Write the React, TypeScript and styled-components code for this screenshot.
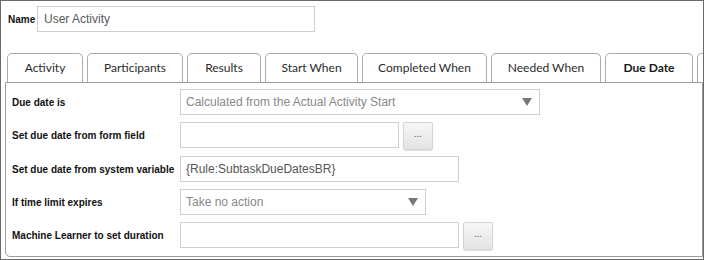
import * as React from 'react'
import styled, {createGlobalStyle} from 'styled-components'

const GlobalStyle = createGlobalStyle`
  html, body {
    margin: 0;
    padding: 0;
    background: #fff;
  }
`

const Frame = styled.div`
  width: 704px;
  height: 260px;
  box-sizing: border-box;
  border: 1px solid #6a6a6a;
  overflow: hidden;
  display: flex;
  flex-direction: column;
  font-family: "Liberation Sans", Arial, sans-serif;
  color: #000;
`

const NameRow = styled.div`
  display: flex;
  align-items: center;
  padding: 5px 0 0 7px;
`

const NameLabel = styled.label`
  width: 29px;
  font-size: 10px;
  font-weight: bold;
  color: #111;
`

const TextBox = styled.div<{w: number}>`
  width: ${p => p.w}px;
  height: 26px;
  box-sizing: border-box;
  border: 1px solid #cfcfcf;
  background: #fff;
  display: flex;
  align-items: center;
  padding-left: 5px;
  font-size: 12px;
  color: #555;
  white-space: nowrap;
  overflow: hidden;
`

const NameBox = styled(TextBox)`
  padding-left: 6px;
  color: #5a5a5a;
`

const TabStrip = styled.div`
  display: flex;
  gap: 4px;
  margin: 21px 0 0 6px;
  height: 29px;
  overflow: hidden;
`

const Tab = styled.div<{w: number; active?: boolean}>`
  flex: none;
  width: ${p => p.w}px;
  height: 29px;
  box-sizing: border-box;
  border: 1px solid #ababab;
  border-bottom: none;
  border-radius: 5px 5px 0 0;
  background: #fff;
  display: flex;
  align-items: center;
  justify-content: center;
  padding-bottom: 1px;
  font-family: Lato, "Liberation Sans", sans-serif;
  font-size: 12px;
  font-weight: ${p => (p.active ? 'bold' : 'normal')};
  color: ${p => (p.active ? '#1a1a1a' : '#2a2a2a')};
`

const Panel = styled.div`
  margin: 0 0 2px 4px;
  flex: 1;
  box-sizing: border-box;
  border: 1px solid #9c9c9c;
  border-radius: 0 0 0 5px;
  padding: 6px 0 0 6px;
  display: flex;
  flex-direction: column;
  gap: 7px;
`

const Row = styled.div<{nudge?: boolean}>`
  display: flex;
  align-items: center;
  height: 26px;
  margin-top: ${p => (p.nudge ? '1px' : '0')};
`

const FieldLabel = styled.label`
  width: 168px;
  flex: none;
  font-size: 10px;
  font-weight: bold;
  color: #111;
  white-space: nowrap;
`

const SelectBox = styled(TextBox)`
  justify-content: space-between;
  color: #888;
  padding-right: 7px;
`

const Hint = styled.span`
  color: #888;
`

const Ellipsis = styled.button`
  width: 30px;
  height: 28px;
  margin-left: 4px;
  align-self: flex-start;
  box-sizing: border-box;
  border: 1px solid #d4d4d4;
  border-radius: 2px;
  background: linear-gradient(#f6f6f6, #e4e4e4);
  box-shadow: 0 1px 1px rgba(0, 0, 0, 0.12);
  font-family: "Liberation Sans", Arial, sans-serif;
  font-size: 8px;
  font-weight: bold;
  letter-spacing: 0.5px;
  color: #6a6a8a;
  padding: 0 0 4px;
`

const Caret = () => (
  <svg width="10" height="8" viewBox="0 0 10 8">
    <polygon points="0,0 10,0 5,8" fill="#777" />
  </svg>
)

const tabs = [
  {label: 'Activity', w: 76},
  {label: 'Participants', w: 96},
  {label: 'Results', w: 74},
  {label: 'Start When', w: 93},
  {label: 'Completed When', w: 125},
  {label: 'Needed When', w: 110},
  {label: 'Due Date', w: 88, active: true},
  {label: '', w: 60}
]

const App = () => {
  return (
    <Frame>
      <GlobalStyle />
      <NameRow>
        <NameLabel>Name</NameLabel>
        <NameBox w={278}>User Activity</NameBox>
      </NameRow>

      <TabStrip>
        {tabs.map((t, i) => (
          <Tab key={i} w={t.w} active={t.active}>{t.label}</Tab>
        ))}
      </TabStrip>

      <Panel>
        <Row>
          <FieldLabel>Due date is</FieldLabel>
          <SelectBox w={360}>
            Calculated from the Actual Activity Start
            <Caret />
          </SelectBox>
        </Row>
        <Row>
          <FieldLabel>Set due date from form field</FieldLabel>
          <TextBox w={219} />
          <Ellipsis>...</Ellipsis>
        </Row>
        <Row nudge>
          <FieldLabel>Set due date from system variable</FieldLabel>
          <TextBox w={279}>{'{Rule:SubtaskDueDatesBR}'}</TextBox>
        </Row>
        <Row>
          <FieldLabel>If time limit expires</FieldLabel>
          <SelectBox w={246}>
            <Hint>Take no action</Hint>
            <Caret />
          </SelectBox>
        </Row>
        <Row>
          <FieldLabel>Machine Learner to set duration</FieldLabel>
          <TextBox w={279} />
          <Ellipsis>...</Ellipsis>
        </Row>
      </Panel>
    </Frame>
  )
}

export default App
